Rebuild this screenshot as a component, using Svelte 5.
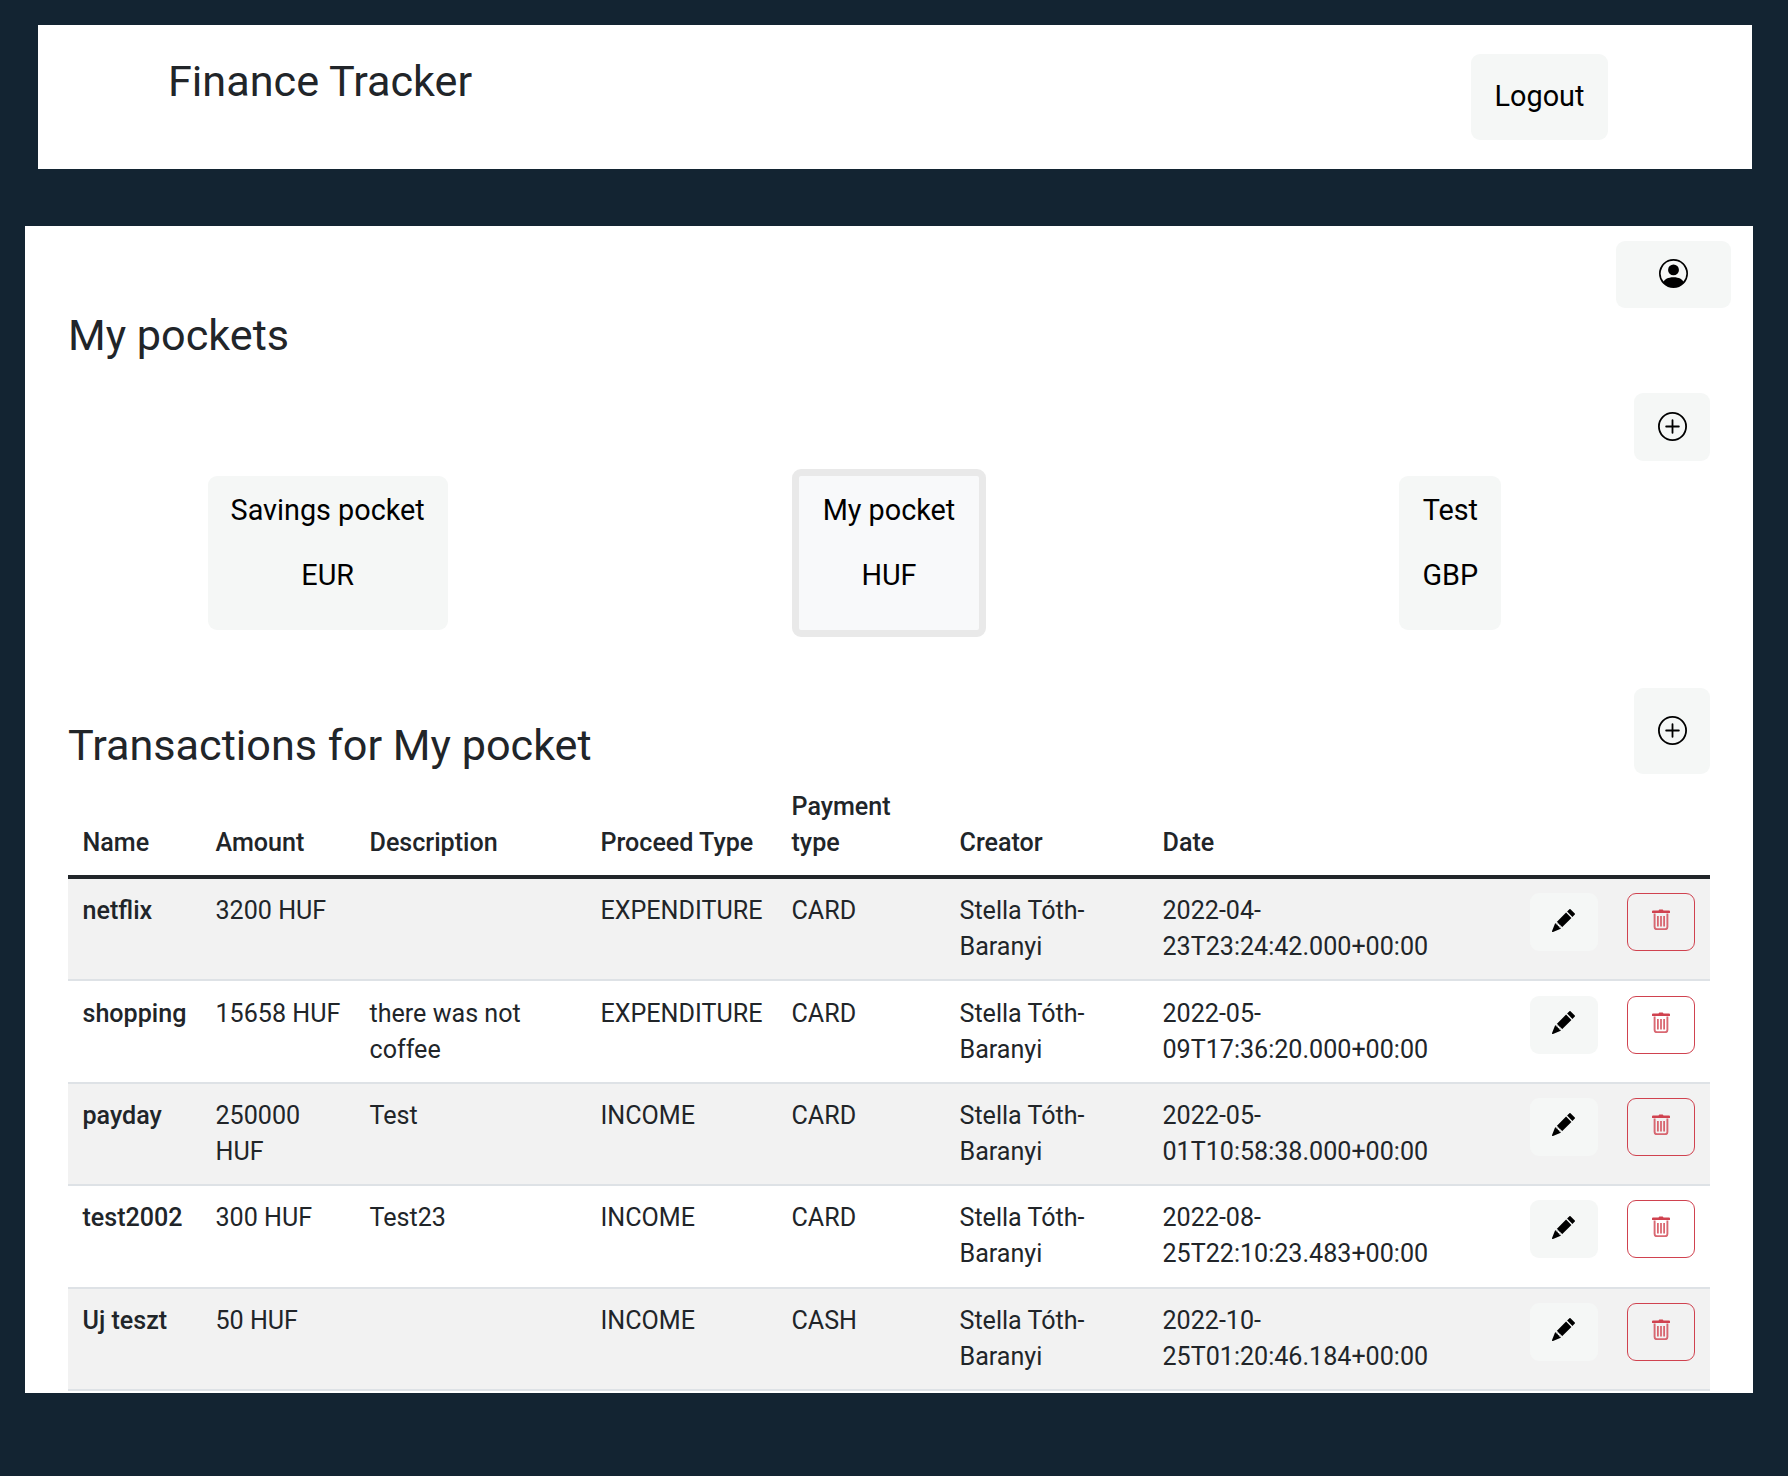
<script>
  const pockets = [
    { name: 'Savings pocket', currency: 'EUR' },
    { name: 'My pocket', currency: 'HUF', selected: true },
    { name: 'Test', currency: 'GBP' },
  ]

  const creator = 'Stella Tóth-Baranyi'
  const transactions = [
    { name: 'netflix', amount: '3200 HUF', description: '', type: 'EXPENDITURE', payment: 'CARD', date: '2022-04-23T23:24:42.000+00:00' },
    { name: 'shopping', amount: '15658 HUF', description: 'there was not coffee', type: 'EXPENDITURE', payment: 'CARD', date: '2022-05-09T17:36:20.000+00:00' },
    { name: 'payday', amount: '250000 HUF', description: 'Test', type: 'INCOME', payment: 'CARD', date: '2022-05-01T10:58:38.000+00:00' },
    { name: 'test2002', amount: '300 HUF', description: 'Test23', type: 'INCOME', payment: 'CARD', date: '2022-08-25T22:10:23.483+00:00' },
    { name: 'Uj teszt', amount: '50 HUF', description: '', type: 'INCOME', payment: 'CASH', date: '2022-10-25T01:20:46.184+00:00' },
  ]
</script>

{#snippet plusIcon()}
  <svg class="icon" viewBox="0 0 16 16" fill="currentColor">
    <path d="M8 15A7 7 0 1 1 8 1a7 7 0 0 1 0 14zm0 1A8 8 0 1 0 8 0a8 8 0 0 0 0 16z" />
    <path d="M8 4a.5.5 0 0 1 .5.5v3h3a.5.5 0 0 1 0 1h-3v3a.5.5 0 0 1-1 0v-3h-3a.5.5 0 0 1 0-1h3v-3A.5.5 0 0 1 8 4z" />
  </svg>
{/snippet}

<div class="page">
  <header class="topbar">
    <h1>Finance Tracker</h1>
    <button class="btn logout">Logout</button>
  </header>

  <main class="card">
    <div class="profile-row">
      <button class="btn profile" aria-label="Profile">
        <svg class="icon" viewBox="0 0 16 16" fill="currentColor">
          <path d="M11 6a3 3 0 1 1-6 0 3 3 0 0 1 6 0z" />
          <path fill-rule="evenodd" d="M0 8a8 8 0 1 1 16 0A8 8 0 0 1 0 8zm8-7a7 7 0 0 0-5.468 11.37C3.242 11.226 4.805 10 8 10s4.757 1.225 5.468 2.37A7 7 0 0 0 8 1z" />
        </svg>
      </button>
    </div>

    <div class="content">
      <h2 class="pockets-title">My pockets</h2>

      <div class="add-row">
        <button class="btn add" aria-label="Add pocket">{@render plusIcon()}</button>
      </div>

      <div class="pockets">
        {#each pockets as pocket}
          <button class="btn pocket" class:selected={pocket.selected}>
            <span>{pocket.name}</span>
            <span>{pocket.currency}</span>
          </button>
        {/each}
      </div>

      <div class="tx-head">
        <h2>Transactions for My pocket</h2>
        <button class="btn add tall" aria-label="Add transaction">{@render plusIcon()}</button>
      </div>

      <table>
        <colgroup>
          <col class="c-name" />
          <col class="c-amount" />
          <col class="c-desc" />
          <col class="c-type" />
          <col class="c-pay" />
          <col class="c-creator" />
          <col class="c-date" />
          <col class="c-edit" />
          <col class="c-del" />
        </colgroup>
        <thead>
          <tr>
            <th>Name</th>
            <th>Amount</th>
            <th>Description</th>
            <th>Proceed Type</th>
            <th>Payment type</th>
            <th>Creator</th>
            <th>Date</th>
            <th></th>
            <th></th>
          </tr>
        </thead>
        <tbody>
          {#each transactions as tx}
            <tr>
              <th>{tx.name}</th>
              <td>{tx.amount}</td>
              <td>{tx.description}</td>
              <td>{tx.type}</td>
              <td>{tx.payment}</td>
              <td>{creator}</td>
              <td>{tx.date}</td>
              <td class="action">
                <button class="btn row-btn" aria-label="Edit">
                  <svg class="row-icon" viewBox="0 0 16 16" fill="currentColor">
                    <path d="M12.854.146a.5.5 0 0 0-.707 0L10.5 1.793 14.207 5.5l1.647-1.646a.5.5 0 0 0 0-.708l-3-3zm.646 6.061L9.793 2.5 3.293 9H3.5a.5.5 0 0 1 .5.5v.5h.5a.5.5 0 0 1 .5.5v.5h.5a.5.5 0 0 1 .5.5v.5h.5a.5.5 0 0 1 .5.5v.207l6.5-6.5zm-7.468 7.468A.5.5 0 0 1 6 13.5V13h-.5a.5.5 0 0 1-.5-.5V12h-.5a.5.5 0 0 1-.5-.5V11h-.5a.5.5 0 0 1-.5-.5V10h-.5a.499.499 0 0 1-.175-.032l-.179.178a.5.5 0 0 0-.11.168l-2 5a.5.5 0 0 0 .65.65l5-2a.5.5 0 0 0 .168-.11l.178-.178z" />
                  </svg>
                </button>
              </td>
              <td class="action">
                <button class="btn row-btn danger" aria-label="Delete">
                  <svg class="trash" viewBox="0 0 18 21">
                    <path d="M6.5 1.6 7.3.4h3.4l.8 1.2H17a1 1 0 0 1 1 1v.8a.6.6 0 0 1-.6.6H.6a.6.6 0 0 1-.6-.6v-.8a1 1 0 0 1 1-1z" fill="currentColor" />
                    <path d="M2.6 4.5v13.6c0 1.2.9 2.1 2.1 2.1h8.6c1.2 0 2.1-.9 2.1-2.1V4.5" fill="none" stroke="currentColor" stroke-width="1.9" opacity="0.8" />
                    <path d="M5.9 7v10.5M9 7v10.5M12.1 7v10.5" fill="none" stroke="currentColor" stroke-width="1.6" opacity="0.9" />
                  </svg>
                </button>
              </td>
            </tr>
          {/each}
        </tbody>
      </table>
    </div>
  </main>
</div>

<style>
  :global(body) {
    background: #132432;
    font-family: Roboto, 'Liberation Sans', sans-serif;
    color: #212529;
    font-size: 25.1px;
    line-height: 36px;
  }

  .page {
    height: 1476px;
    overflow: hidden;
    padding-top: 25px;
    box-sizing: border-box;
  }

  h1,
  h2 {
    margin: 0;
    font-weight: 400;
    font-size: 43.2px;
    line-height: 52px;
  }

  .btn {
    border: 0;
    border-radius: 9px;
    background: #f5f7f6;
    color: #000;
    font: inherit;
    display: flex;
    align-items: center;
    justify-content: center;
    padding: 0;
  }

  .icon {
    width: 29px;
    height: 29px;
    margin-bottom: 2px;
  }

  .topbar {
    margin: 0 36px 0 38px;
    height: 144px;
    background: #fff;
    display: flex;
    justify-content: space-between;
    align-items: flex-start;
    padding: 30.5px 144px 0 130px;
    box-sizing: border-box;
  }

  .logout {
    margin-top: -1.5px;
    width: 137px;
    height: 86px;
    padding-bottom: 2px;
    font-size: 28.8px;
  }

  .card {
    margin: 57px 35px 0 25px;
    height: 1167px;
    background: #fff;
    overflow: hidden;
  }

  .profile-row {
    display: flex;
    justify-content: flex-end;
    padding: 15px 22px 0 0;
  }

  .profile {
    width: 115px;
    height: 67px;
  }

  .content {
    padding: 0 43px;
  }

  .pockets-title {
    margin-top: 1.5px;
  }

  .add-row {
    display: flex;
    justify-content: flex-end;
    margin-top: 31.5px;
  }

  .add {
    width: 76px;
    height: 68px;
  }

  .add.tall {
    height: 86px;
  }

  .pockets {
    display: grid;
    grid-template-columns: repeat(3, 1fr);
    justify-items: center;
    align-items: center;
    margin: 8px -21px 0;
  }

  .pocket {
    flex-direction: column;
    justify-content: flex-start;
    height: 154px;
    padding: 16px 23px 0;
    font-size: 28.8px;
    gap: 29px;
    line-height: 36px;
  }

  .pocket.selected {
    height: 168px;
    padding: 16px 24px 0;
    border: 7px solid #e9e9e9;
    background: #f8f9fa;
  }

  .tx-head {
    display: flex;
    justify-content: space-between;
    align-items: flex-end;
    margin-top: 51px;
  }

  .tx-head h2 {
    margin-bottom: 2.5px;
  }

  table {
    width: 100%;
    table-layout: fixed;
    border-collapse: collapse;
    margin-top: 15px;
  }

  .c-name { width: 133px; }
  .c-amount { width: 154px; }
  .c-desc { width: 231px; }
  .c-type { width: 191px; }
  .c-pay { width: 168px; }
  .c-creator { width: 203px; }
  .c-date { width: 368px; }
  .c-edit { width: 97px; }
  .c-del { width: 97px; }

  thead th {
    text-align: left;
    vertical-align: bottom;
    font-weight: 500;
    padding: 0 14px 14px 14.5px;
    border-bottom: 4px solid #212529;
  }

  tbody tr {
    border-bottom: 2px solid #dee2e6;
  }

  tbody tr:nth-child(odd) {
    background: #f2f2f2;
  }

  tbody th,
  tbody td {
    text-align: left;
    vertical-align: top;
    padding: 14.2px 14px 14.2px 14.5px;
    overflow-wrap: anywhere;
  }

  tbody th {
    font-weight: 500;
  }

  tbody td.action {
    padding-left: 14px;
  }

  .row-btn {
    width: 68px;
    height: 58px;
    box-sizing: border-box;
  }

  .row-icon {
    width: 23px;
    height: 23px;
    margin: 0 1px 4px 0;
  }

  .danger {
    background: transparent;
    border: 1.5px solid #d0424f;
    color: #d0424f;
  }

  .trash {
    width: 18px;
    height: 21px;
    margin-bottom: 5px;
  }
</style>
